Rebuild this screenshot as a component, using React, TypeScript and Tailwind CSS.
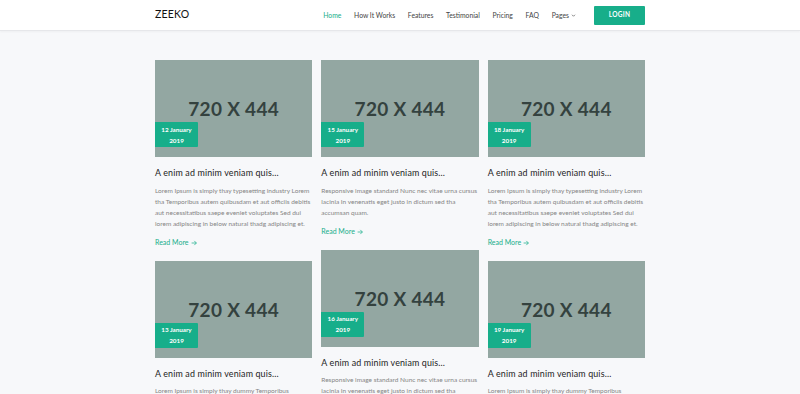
import React from "react";

const LOREM = [
  "Lorem Ipsum is simply thay typesetting industry Lorem",
  "tha Temporibus autem quibusdam et aut officiis debitis",
  "aut necessitatibus saepe eveniet voluptates Sed dui",
  "lorem adipiscing in below natural thadg adipiscing et.",
];
const RESP = [
  "Responsive image standard Nunc nec vitae urna cursus",
  "lacinia In venenatis eget justo in dictum sed tha",
  "accumsan quam.",
];
const DUMMY = [
  "Lorem Ipsum is simply thay dummy Temporibus",
  "autem quibusdam et aut officiis debitis aut",
  "necessitatibus saepe eveniet voluptates Sed dui",
];

type Post = { date: string; lines: string[] };

const columns: Post[][] = [
  [
    { date: "12 January", lines: LOREM },
    { date: "13 January", lines: DUMMY },
  ],
  [
    { date: "15 January", lines: RESP },
    { date: "16 January", lines: RESP },
  ],
  [
    { date: "18 January", lines: LOREM },
    { date: "19 January", lines: DUMMY },
  ],
];

function Card({ post }: { post: Post }) {
  return (
    <div className="flex flex-col">
      <div className="relative h-[97px] bg-[#93a7a2] flex items-center justify-center">
        <span className="text-[19px] font-bold text-[#34423f] tracking-[0.3px] leading-none">
          720 X 444
        </span>
        <div className="absolute left-0 bottom-[10px] w-[43px] h-[25px] bg-[#17ae8a] rounded-r-[1px] flex flex-col items-center justify-center text-white font-bold text-[6.3px] leading-[11px]">
          <span>{post.date}</span>
          <span>2019</span>
        </div>
      </div>
      <h3 className="mt-[10px] text-[8.9px] leading-[12px] text-[#222] font-normal tracking-[0.15px]">
        A enim ad minim veniam quis...
      </h3>
      <p className="mt-[5.5px] text-[6.5px] leading-[11px] text-[#858585]">
        {post.lines.map((l, i) => (
          <span key={i} className="block whitespace-nowrap">
            {l}
          </span>
        ))}
      </p>
      <a className="mt-[8.5px] text-[7px] leading-[11px] text-[#17ae8a] flex items-center gap-[2px]">
        Read More
        <svg width="6" height="6" viewBox="0 0 10 10" fill="none" stroke="#17ae8a" strokeWidth="1.2">
          <path d="M1 5h8M5.5 1.5L9 5l-3.5 3.5" />
        </svg>
      </a>
    </div>
  );
}

export default function App() {
  const nav = ["How It Works", "Features", "Testimonial", "Pricing", "FAQ"];
  return (
    <div
      className="h-[394px] bg-[#f7f8fa] overflow-hidden"
      style={{ fontFamily: "Lato, 'Open Sans', sans-serif" }}
    >
      <header className="h-[31px] bg-white border-b border-[#e6e7ea] shadow-[0_1px_2px_rgba(0,0,0,0.04)]">
        <div className="w-[490px] mx-auto h-full flex items-center justify-between">
          <div className="text-[10.5px] text-[#111] tracking-[0.2px]">ZEEKO</div>
          <nav className="flex items-center text-[6.8px] text-[#444]">
            <span className="text-[#17ae8a]">Home</span>
            {nav.map((n) => (
              <span key={n} className="ml-[12.7px]">
                {n}
              </span>
            ))}
            <span className="ml-[12.7px] flex items-center gap-[2px]">
              Pages
              <svg width="5" height="5" viewBox="0 0 10 10" fill="none" stroke="#444" strokeWidth="1.3">
                <path d="M2 3.5l3 3 3-3" />
              </svg>
            </span>
            <button className="ml-[18px] w-[51px] h-[19px] bg-[#17ae8a] text-white text-[6.5px] font-bold rounded-[1px] tracking-[0.3px]">
              LOGIN
            </button>
          </nav>
        </div>
      </header>
      <main className="w-[490px] mx-auto pt-[29px] grid grid-cols-3 gap-x-[9px]">
        {columns.map((col, i) => (
          <div key={i} className="flex flex-col gap-[12.5px]">
            {col.map((p, j) => (
              <Card key={j} post={p} />
            ))}
          </div>
        ))}
      </main>
    </div>
  );
}
